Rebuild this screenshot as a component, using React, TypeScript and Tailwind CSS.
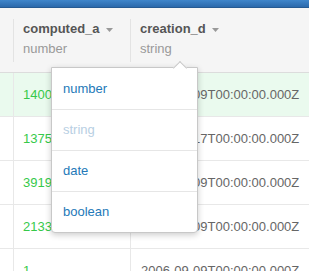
import React from "react";

interface Row {
  value: string;
  date: string;
}

const rows: Row[] = [
  { value: "14008", date: "2006-09-09T00:00:00.000Z" },
  { value: "13752", date: "2006-09-17T00:00:00.000Z" },
  { value: "39195", date: "2006-09-09T00:00:00.000Z" },
  { value: "21336", date: "2006-09-09T00:00:00.000Z" },
  { value: "1", date: "2006-09-09T00:00:00.000Z" },
];

const types = [
  { label: "number", disabled: false },
  { label: "string", disabled: true },
  { label: "date", disabled: false },
  { label: "boolean", disabled: false },
];

const Caret: React.FC = () => (
  <svg width="7" height="4" viewBox="0 0 7 4" className="ml-[6px] mt-[1px]">
    <path d="M0 0h7L3.5 4z" fill="#999" />
  </svg>
);

const HeaderCell: React.FC<{ name: string; type: string; width: string }> = ({ name, type, width }) => (
  <div className={`${width} shrink-0 pt-[11px]`}>
    <div className="h-[43px] border-l border-[#e3e3e3] pl-[9px] leading-5">
      <div className="flex items-center font-bold text-[#555]">
        {name}
        <Caret />
      </div>
      <div className="text-[#999]">{type}</div>
    </div>
  </div>
);

const App: React.FC = () => {
  return (
    <div
      className="relative h-[271px] w-[309px] overflow-hidden bg-white text-[13px]"
      style={{ fontFamily: '"Liberation Sans", Arial, sans-serif' }}
    >
      <div className="h-[8px] border-b border-[#255a92] bg-gradient-to-b from-[#3f86cb] to-[#2b69ab]" />

      <div className="flex h-[65px] border-b border-[#dcdcdc] bg-[#f5f5f5]">
        <div className="w-[13px] shrink-0" />
        <HeaderCell name="computed_a" type="number" width="w-[117px]" />
        <HeaderCell name="creation_d" type="string" width="w-[200px]" />
      </div>

      {rows.map((row, i) => (
        <div
          key={i}
          className={`flex h-[44px] border-b border-[#e8e8e8] ${i === 0 ? "bg-[#eafaee]" : "bg-white"}`}
        >
          <div className="w-[13px] shrink-0" />
          <div className="flex w-[117px] shrink-0 items-center border-l border-[#e8e8e8] pl-[9px] text-[#36c94a]">
            {row.value}
          </div>
          <div className="flex w-[200px] shrink-0 items-center whitespace-nowrap border-l border-[#e8e8e8] pl-[10px] text-[#666]">
            {row.date}
          </div>
        </div>
      ))}

      {/* type menu */}
      <div className="absolute left-[51px] top-[67px] w-[147px] rounded-b-[4px] border border-[#c8c8c8] bg-white shadow-[0_2px_6px_rgba(0,0,0,0.2)]">
        <div className="absolute -top-[5px] left-[123px] h-[10px] w-[10px] rotate-45 border-l border-t border-[#c8c8c8] bg-white" />
        {types.map((t, i) => (
          <div
            key={t.label}
            className={`relative flex h-[41px] items-center pl-[11px] ${i > 0 ? "border-t border-[#e6e6e6]" : ""} ${
              t.disabled ? "text-[#b8cfe3]" : "text-[#2479b8]"
            }`}
          >
            {t.label}
          </div>
        ))}
      </div>
    </div>
  );
};

export default App;
